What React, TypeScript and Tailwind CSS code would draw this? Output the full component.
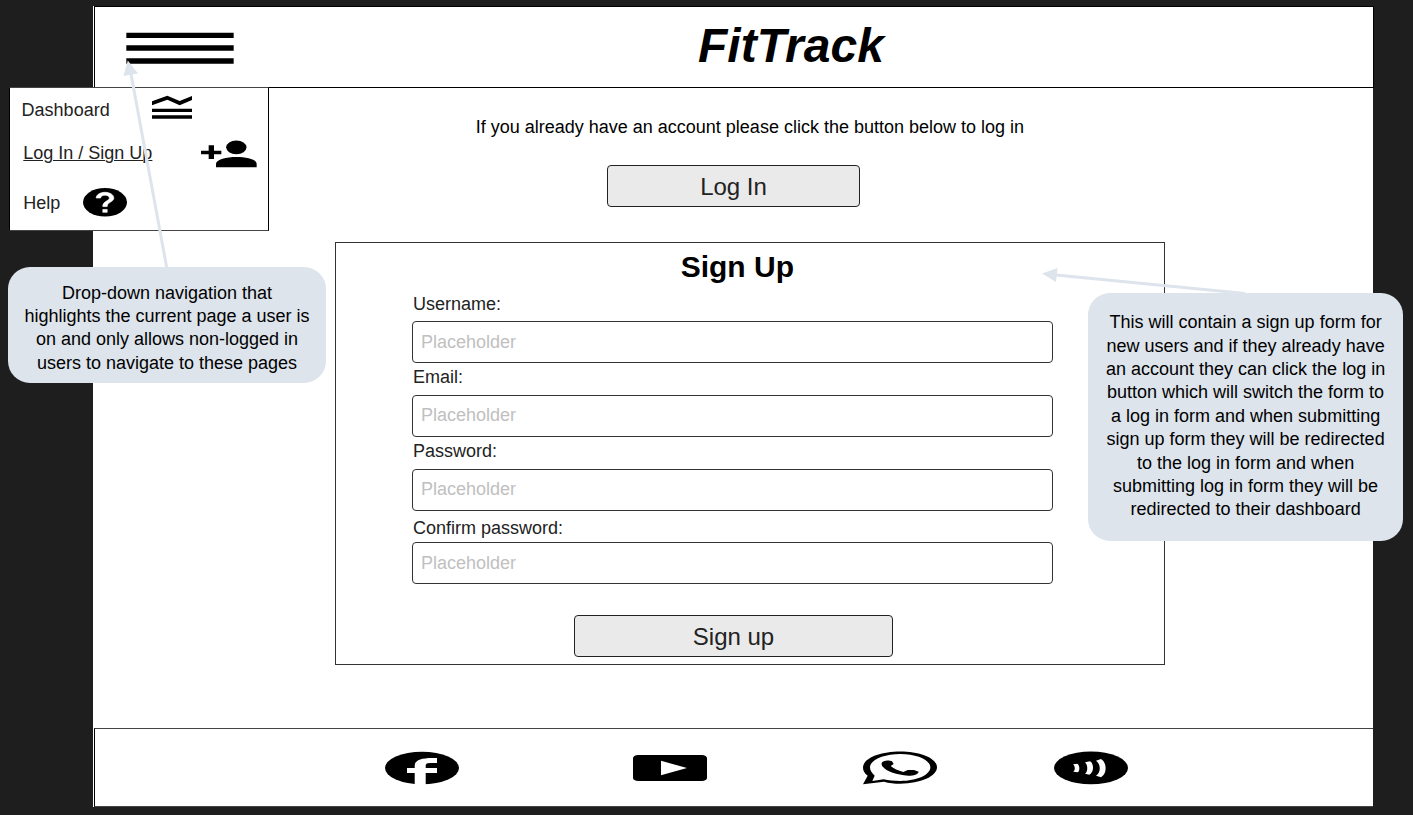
import type { ReactNode } from "react";

function Stretch({ box, className, children }: { box: string; className: string; children: ReactNode }) {
  return (
    <svg viewBox={box} preserveAspectRatio="none" className={className} aria-hidden="true">
      {children}
    </svg>
  );
}

function MenuIcon() {
  return (
    <Stretch box="378 96 324 99" className="ml-[31px] mt-[25px] h-[33px] w-[108px] shrink-0">
      <path d="M379 98H701V114H379ZM379 136H701V152.500H379ZM379 175H701V191.500H379Z" />
    </Stretch>
  );
}

function ChartIcon() {
  return (
    <Stretch box="456 285 120 72" className="h-[24px] w-[40px]">
      <path d="M456 304L502 287L539 303L576 288V300L539 316L502 299L456 316ZM456 326H576V336H456ZM456 346H576V356H456Z" />
    </Stretch>
  );
}

function PersonAddIcon() {
  return (
    <Stretch box="600 420 171 84" className="h-[28px] w-[57px]">
      <path d="M603 452.500H626V436H642V452.500H664V462.500H642V477H626V462.500H603Z" />
      <ellipse cx="709" cy="442" rx="30.500" ry="20.500" />
      <path d="M648 502V492C648 478 680 471 709 471C740 471 770 478 770 492V502Z" />
    </Stretch>
  );
}

function HelpIcon() {
  return (
    <Stretch box="2 2 20 20" className="h-[28.6px] w-[44px]">
      <circle cx="12" cy="12" r="10" />
      <path
        fill="white"
        stroke="white"
        strokeWidth="0.35"
        d="M13 19h-2v-2h2v2zm2.070-7.750l-.9.92C13.450 12.900 13 13.500 13 15h-2v-.5c0-1.100.45-2.100 1.170-2.830l1.240-1.260c.37-.36.59-.86.59-1.410 0-1.100-.9-2-2-2s-2 .9-2 2H8c0-2.210 1.790-4 4-4s4 1.790 4 4c0 .88-.36 1.680-.93 2.250z"
      />
    </Stretch>
  );
}

function FacebookIcon() {
  return (
    <Stretch box="385 751 74 34" className="h-[34px] w-[74px]">
      <ellipse cx="422" cy="768" rx="37" ry="16.3" />
      <path
        fill="white"
        d="M437 758H432C421 758 414.700 760.500 414.700 765.500V768H407V773H414.700V785H425.700V773H437V768H425.700V765.500C425.700 763.800 427 763 430 763H437Z"
      />
    </Stretch>
  );
}

function YoutubeIcon() {
  return (
    <Stretch box="0 0 74 26" className="h-[26px] w-[74px]">
      <rect width="74" height="26" rx="5" ry="3" />
      <path fill="white" d="M28 5.800L54 13L28 20.200Z" />
    </Stretch>
  );
}

function WhatsappIcon() {
  return (
    <Stretch box="69 93 222 102" className="h-[34px] w-[74px]">
      <path
        fillRule="evenodd"
        d="M181 94.500C242 94.500 291 115 291 142C291 169 242 191 181 191C163 191 147 189 132 185L69 193L83 167C74 160 69 152 69 143C69 115 119 94.500 181 94.500ZM181 102C131 102 90 120 90 142C90 151 95 159 104 167L97 183L131 178C145 181 162 183 181 183C231 183 271 165 271 142C271 120 231 102 181 102Z"
      />
      <path d="M125 130C127 122 140 120 150 122L156 124L161 132L152 138C160 146 175 152 190 156L203 150L222 150L236 155C234 163 222 167 205 167C170 165 140 155 130 142C126 138 124 133 125 130Z" />
    </Stretch>
  );
}

function SpotifyIcon() {
  return (
    <Stretch box="642 93 222 102" className="h-[34px] w-[74px]">
      <ellipse cx="753" cy="143.700" rx="111" ry="49" />
      <path
        fill="white"
        d="M699 133L712 131C720 136 720 152 713 157L700 155C706 150 706 139 699 133ZM735 127L750 124C762 130 763 157 748 164L735 161C744 154 744 135 735 127ZM768 122L783 117C800 126 803 160 783 172L768 167C783 158 783 132 768 122Z"
      />
    </Stretch>
  );
}

function Field({ label, className, inputClass }: { label: string; className: string; inputClass: string }) {
  return (
    <label className={`flex flex-col text-[#222] ${className}`}>
      <span className="leading-[20px]">{label}</span>
      <input
        placeholder="Placeholder"
        className={`-ml-px mt-auto h-[42px] w-[641px] rounded-[4px] border border-[#333] px-2 placeholder:text-[#c0c0c0] ${inputClass}`}
      />
    </label>
  );
}

function ActionButton({ children, className }: { children: ReactNode; className: string }) {
  return (
    <button
      className={`h-[42px] rounded-[4px] border border-[#222] bg-[#eaeaea] pt-[2px] text-2xl text-[#222] ${className}`}
    >
      {children}
    </button>
  );
}

function NavMenu() {
  return (
    <nav className="absolute left-[9px] top-[87px] flex h-[144px] w-[260px] flex-col border border-black border-y-[#444] bg-white text-[#222]">
      <div className="flex h-[42px] items-start pl-[11.600px]">
        <span className="mt-[12px] w-[130.400px] leading-[20px]">Dashboard</span>
        <div className="mt-[7px]">
          <ChartIcon />
        </div>
      </div>
      <div className="flex h-[50px] items-start pl-[13.300px]">
        <span className="mt-[13px] w-[176.700px] leading-[20px] underline decoration-1 underline-offset-[1px]">
          Log In / Sign Up
        </span>
        <div className="mt-[10px]">
          <PersonAddIcon />
        </div>
      </div>
      <div className="flex items-start pl-[13.300px]">
        <span className="mt-[13px] w-[59.400px] leading-[20px]">Help</span>
        <div className="mt-[8px]">
          <HelpIcon />
        </div>
      </div>
    </nav>
  );
}

function Arrows() {
  return (
    <svg className="pointer-events-none absolute left-0 top-0 h-[815px] w-[1413px]" viewBox="0 0 1413 815">
      <g fill="#dde4ec" stroke="#dde4ec">
        <path d="M166.800 268L131 74" strokeWidth="3" />
        <path stroke="none" d="M127.800 60.500L138 73.500L123.500 76Z" />
        <path d="M1245 293.500L1056 275" strokeWidth="3" />
        <path stroke="none" d="M1042 273.500L1057.500 268L1056 282Z" />
      </g>
    </svg>
  );
}

function Note({ lines, className }: { lines: string[]; className: string }) {
  return (
    <aside
      className={`absolute flex flex-col items-center rounded-[22px] bg-[#dde4ec] leading-[23.4px] text-black ${className}`}
    >
      {lines.map((line) => (
        <span key={line} className="whitespace-nowrap">
          {line}
        </span>
      ))}
    </aside>
  );
}

export default function App() {
  return (
    <div className="relative flex h-[815px] w-[1413px] flex-col overflow-hidden bg-[#1e1e1e] pl-[93px] pt-[6px] font-['Liberation_Sans',Arial,sans-serif] text-[18px]">
      <div className="flex h-[801px] w-[1281px] flex-col">
        <header className="flex h-[82px] w-[1281px] border-l border-white">
          <div className="flex w-[1280px] border border-black bg-white">
            <MenuIcon />
            <h1 className="ml-[464px] mt-[11px] text-5xl font-bold italic leading-[56px]">FitTrack</h1>
          </div>
        </header>

        <main className="flex h-[640px] w-[1280px] flex-col bg-white">
          <p className="ml-[382.700px] mt-[29px] leading-[20px]">
            If you already have an account please click the button below to log in
          </p>
          <ActionButton className="ml-[514px] mt-[28px] w-[253px]">Log In</ActionButton>

          <form className="ml-[242px] mt-[35px] flex h-[423px] w-[830px] flex-col border border-[#333] pl-[77px]">
            <h2 className="ml-[267.700px] mt-[7px] text-[30px] font-bold leading-[34px]">Sign Up</h2>
            <Field label="Username:" className="mt-[10px] h-[69px]" inputClass="pb-0" />
            <Field label="Email:" className="mt-[4px] h-[70px]" inputClass="pb-[2px]" />
            <Field label="Password:" className="mt-[4px] h-[70px]" inputClass="pb-[2px]" />
            <Field label="Confirm password:" className="mt-[7px] h-[66px]" inputClass="pb-0" />
            <ActionButton className="ml-[161px] mt-[31px] w-[319px]">Sign up</ActionButton>
          </form>
        </main>

        <footer className="flex h-[79px] w-[1280px] border-l border-white">
          <div className="flex w-[1279px] items-center border-y border-l border-[#444] border-l-black bg-white pl-[290px] pt-[1px]">
            <FacebookIcon />
            <div className="ml-[173.700px]">
              <YoutubeIcon />
            </div>
            <div className="ml-[156.300px]">
              <WhatsappIcon />
            </div>
            <div className="ml-[117px]">
              <SpotifyIcon />
            </div>
          </div>
        </footer>
      </div>

      <NavMenu />
      <Arrows />
      <Note
        className="left-[8px] top-[266.500px] h-[116px] w-[318px] pt-[15px]"
        lines={[
          "Drop-down navigation that",
          "highlights the current page a user is",
          "on and only allows non-logged in",
          "users to navigate to these pages",
        ]}
      />
      <Note
        className="left-[1088.400px] top-[292.500px] h-[248px] w-[314.400px] pt-[18.600px]"
        lines={[
          "This will contain a sign up form for",
          "new users and if they already have",
          "an account they can click the log in",
          "button which will switch the form to",
          "a log in form and when submitting",
          "sign up form they will be redirected",
          "to the log in form and when",
          "submitting log in form they will be",
          "redirected to their dashboard",
        ]}
      />
    </div>
  );
}
